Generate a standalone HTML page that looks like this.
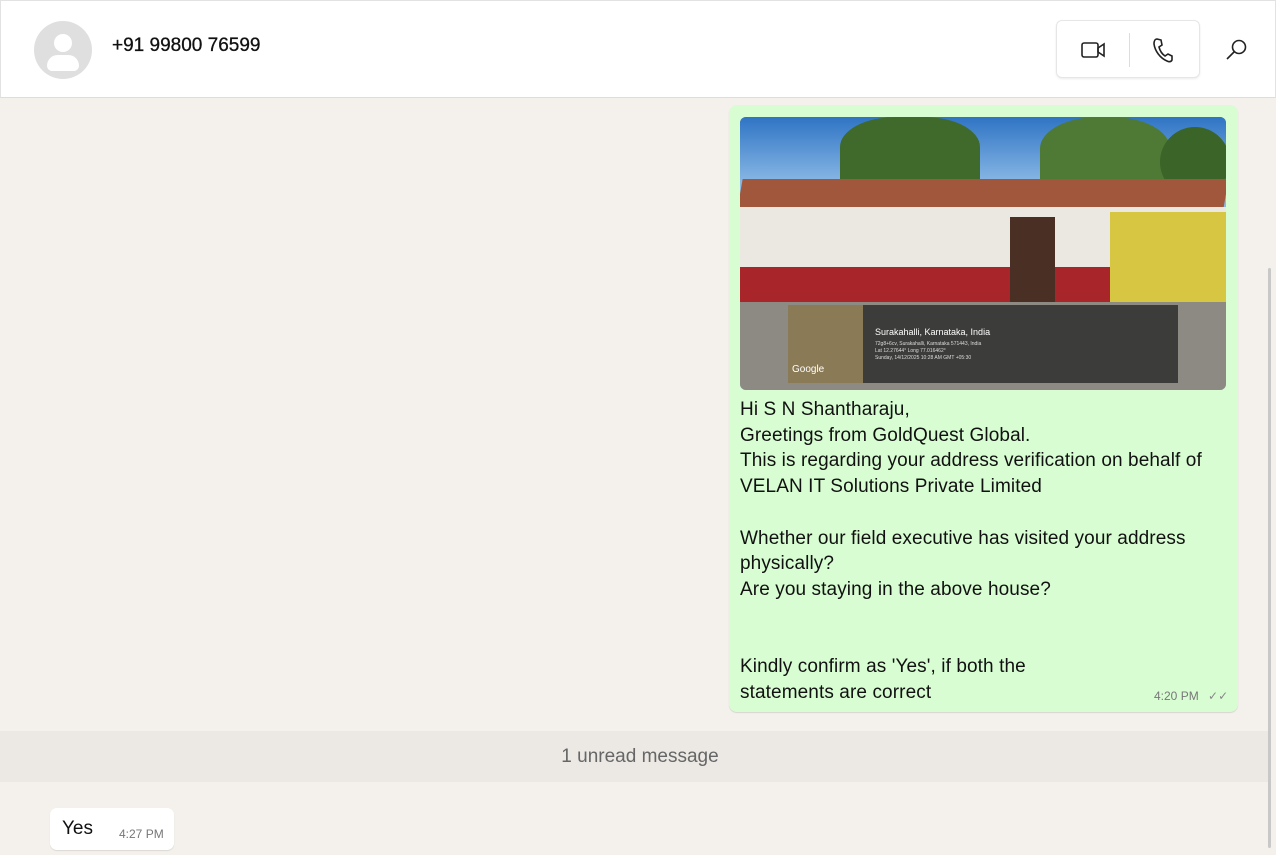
<!DOCTYPE html>
<html><head><meta charset="utf-8"><style>
*{margin:0;padding:0;box-sizing:border-box}
body{width:1276px;height:855px;overflow:hidden;background:#f4f0ea;font-family:"Segoe UI","Liberation Sans",sans-serif;position:relative}
.hdr{position:absolute;left:0;top:0;width:1276px;height:98px;background:#fff;border:1px solid #e2e2e2;border-bottom:1px solid #ddd}
.av{position:absolute;left:33px;top:20px;width:58px;height:58px;border-radius:50%;background:#dfdfdf;overflow:hidden}
.name{position:absolute;left:111px;top:34px;font-size:19px;color:#111;-webkit-text-stroke:0.3px #111}
.btns{position:absolute;left:1055px;top:19px;width:144px;height:58px;border:1px solid #e6e6e6;border-radius:6px;background:#fff;box-shadow:0 1px 2px rgba(0,0,0,.08)}
.chat{position:absolute;left:0;top:98px;width:1276px;height:757px;background:#f4f1ec}
.bub{position:absolute;left:729px;top:105px;width:509px;height:607px;background:#d8fdd2;border-radius:8px;box-shadow:0 1px 1px rgba(0,0,0,.12)}
.img{position:absolute;left:740px;top:117px;width:486px;height:273px;border-radius:6px;overflow:hidden;background:linear-gradient(#3d7fc9,#8ab9e6 30%)}
.txt{position:absolute;left:740px;top:397px;font-size:19px;line-height:25.7px;color:#111;width:490px;letter-spacing:0.1px}
.time{position:absolute;left:1154px;top:689px;font-size:12px;color:#777}
.unread{position:absolute;left:0;top:731px;width:1270px;height:51px;background:rgba(228,225,219,.5);text-align:center;font-size:19px;color:#666;line-height:51px;padding-left:10px}
.yes{position:absolute;left:50px;top:808px;width:124px;height:42px;background:#fff;border-radius:7px;box-shadow:0 1px 1px rgba(0,0,0,.1)}
</style></head><body>
<div class="hdr">
 <div class="av"><div style="position:absolute;left:20px;top:13px;width:18px;height:18px;border-radius:50%;background:#fff"></div><div style="position:absolute;left:13px;top:34px;width:32px;height:16px;border-radius:16px 16px 8px 8px;background:#fff"></div></div>
 <div class="name">+91 99800 76599</div>
 <div class="btns">
  <svg style="position:absolute;left:23px;top:17px" width="28" height="24" viewBox="0 0 28 24" fill="none" stroke="#222" stroke-width="1.6"><rect x="2" y="5" width="16" height="14" rx="2"/><path d="M18 10l6-4v12l-6-4z"/></svg>
  <div style="position:absolute;left:72px;top:12px;width:1px;height:34px;background:#ddd"></div>
  <svg style="position:absolute;left:94px;top:16px" width="24" height="26" viewBox="0 0 24 26" fill="none" stroke="#222" stroke-width="1.6"><path d="M6 2l4 1 1 5-3 2c1 4 3 7 6 9l3-2 4 2v4c-1 2-3 2-5 1C9 21 4 14 3 7c0-3 1-5 3-5z"/></svg>
 </div>
 <svg style="position:absolute;left:1224px;top:37px" width="24" height="24" viewBox="0 0 24 24" fill="none" stroke="#222" stroke-width="1.6"><circle cx="14" cy="9" r="6.5"/><path d="M9.5 13.5L2 21"/></svg>
</div>
<div class="chat"></div>
<div class="bub"></div>
<div class="img">
 <div style="position:absolute;left:0;top:0;width:486px;height:80px;background:linear-gradient(#2f74c4,#9cc6ec)"></div>
 <div style="position:absolute;left:100px;top:0;width:140px;height:75px;background:#3f6a2c;border-radius:40% 40% 0 0"></div>
 <div style="position:absolute;left:300px;top:0;width:130px;height:70px;background:#4e7a35;border-radius:45% 45% 0 0"></div>
 <div style="position:absolute;left:420px;top:10px;width:70px;height:70px;background:#3a6428;border-radius:50%"></div>
 <div style="position:absolute;left:0;top:62px;width:486px;height:30px;background:#a0573c;transform:skewX(-10deg)"></div>
 <div style="position:absolute;left:0;top:90px;width:486px;height:95px;background:#ebe8e2"></div>
 <div style="position:absolute;left:0;top:150px;width:486px;height:40px;background:#a8262a"></div>
 <div style="position:absolute;left:270px;top:100px;width:45px;height:85px;background:#4a3024"></div>
 <div style="position:absolute;left:370px;top:95px;width:116px;height:90px;background:#d6c642"></div>
 <div style="position:absolute;left:0;top:185px;width:486px;height:88px;background:#8d8a83"></div>
 <div style="position:absolute;left:48px;top:188px;width:390px;height:78px;background:rgba(40,40,40,.8)"></div>
 <div style="position:absolute;left:48px;top:188px;width:75px;height:78px;background:#8a7a55"></div>
 <div style="position:absolute;left:135px;top:210px;font-size:9px;color:#fff;font-family:'Liberation Sans'">Surakahalli, Karnataka, India</div>
 <div style="position:absolute;left:135px;top:224px;font-size:5px;color:#ddd;line-height:7px;font-family:'Liberation Sans'">72g8+6cv, Surakahalli, Karnataka 571443, India<br>Lat 12.27644° Long 77.016462°<br>Sunday, 14/12/2025 10:28 AM GMT +05:30</div>
 <div style="position:absolute;left:52px;top:247px;font-size:10px;color:#fff;font-family:'Liberation Sans'">Google</div>
</div>
<div class="txt">Hi S N Shantharaju,<br>Greetings from GoldQuest Global.<br>This is regarding your address verification on behalf of<br>VELAN IT Solutions Private Limited<br><br>Whether our field executive has visited your address<br>physically?<br>Are you staying in the above house?<br><br><br>Kindly confirm as 'Yes', if both the<br>statements are correct</div>
<div class="time">4:20 PM <span style="color:#888;margin-left:6px">✓✓</span></div>
<div class="unread">1 unread message</div>
<div class="yes"><span style="position:absolute;left:12px;top:10px;font-size:19px;color:#111">Yes</span><span style="position:absolute;left:69px;top:19px;font-size:12px;color:#777">4:27 PM</span></div>
<div style="position:absolute;left:1268px;top:268px;width:3px;height:580px;background:#c8c8c8;border-radius:2px"></div>
</body></html>
